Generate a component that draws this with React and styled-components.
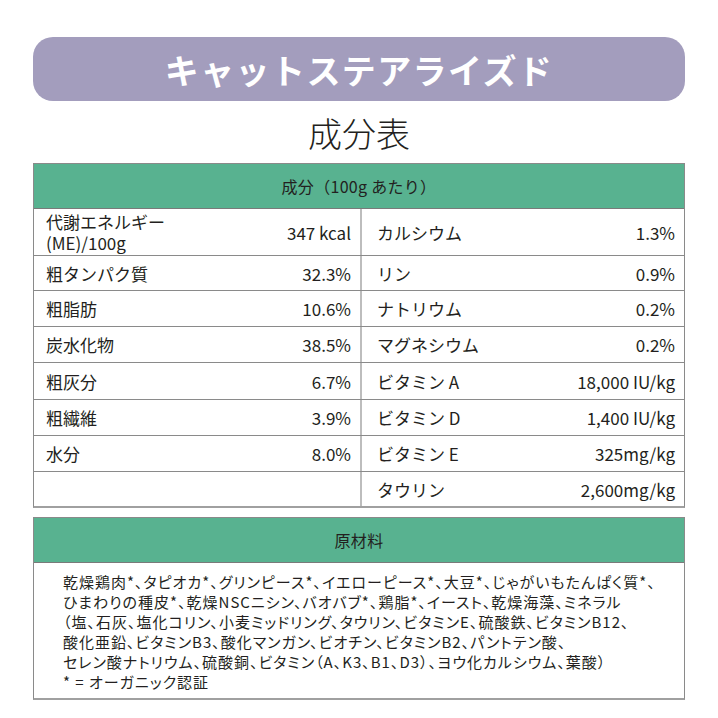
import styled, { createGlobalStyle } from 'styled-components';

const Global = createGlobalStyle`
* { box-sizing: border-box; }
body {
  margin: 0;
  background: #ffffff;
  font-family: "Noto Sans CJK JP", "Noto Sans", sans-serif;
  color: #231f20;
}
`

const Page = styled.div`
width: 718px;
height: 718px;
padding: 37px 33px 0 33px;
display: flex;
flex-direction: column;
`

const Banner = styled.div`
height: 64px;
border-radius: 20px;
background-color: #a39dbd;
color: #ffffff;
display: flex;
align-items: center;
justify-content: center;
font-size: 34px;
font-weight: 700;
letter-spacing: 1.4px;
`

const Title = styled.h1`
margin: 0;
height: 62px;
display: flex;
align-items: center;
justify-content: center;
font-size: 34px;
font-weight: 300;
color: #231f20;
`

const Table = styled.div`
border: 1px solid #8a8a8a;
border-bottom: 2px solid #a0a0a0;
display: flex;
flex-direction: column;
`

const Head = styled.div`
height: ${p => p.$h}px;
background-color: #58b290;
border-bottom: 1px solid #7a7a7a;
display: flex;
align-items: center;
justify-content: center;
font-size: 16px;
letter-spacing: 0.3px;
color: #231f20;
`

const Row = styled.div`
display: grid;
grid-template-columns: 326px 1fr;
height: ${p => p.$h}px;
border-top: ${p => (p.$first ? 'none' : '1px solid #8a8a8a')};
`

const Cell = styled.div`
display: flex;
align-items: center;
justify-content: space-between;
padding: ${p => (p.$right ? '0 9px 0 15px' : '0 9px 0 12px')};
border-left: ${p => (p.$right ? '2px solid #bdbdbd' : 'none')};
`

const Label = styled.span`
font-size: 17px;
line-height: 21px;
`

const Value = styled.span`
font-size: 17px;
white-space: nowrap;
`

const Spacer = styled.div`
height: 9px;
flex-shrink: 0;
`

const Ingredients = styled.div`
padding: 9px 0 6px 29px;
font-size: 15px;
line-height: 20px;
letter-spacing: 1px;
font-feature-settings: "palt";
white-space: nowrap;
`

const left = [
  ['代謝エネルギー\n(ME)/100g', '347 kcal'],
  ['粗タンパク質', '32.3%'],
  ['粗脂肪', '10.6%'],
  ['炭水化物', '38.5%'],
  ['粗灰分', '6.7%'],
  ['粗繊維', '3.9%'],
  ['水分', '8.0%'],
  ['', ''],
]

const right = [
  ['カルシウム', '1.3%'],
  ['リン', '0.9%'],
  ['ナトリウム', '0.2%'],
  ['マグネシウム', '0.2%'],
  ['ビタミン A', '18,000 IU/kg'],
  ['ビタミン D', '1,400 IU/kg'],
  ['ビタミン E', '325mg/kg'],
  ['タウリン', '2,600mg/kg'],
]

const heights = [46, 35, 36, 36, 37, 36, 36, 35]

const lines = [
  '乾燥鶏肉*、タピオカ*、グリンピース*、イエローピース*、大豆*、じゃがいもたんぱく質*、',
  'ひまわりの種皮*、乾燥NSCニシン、バオバブ*、鶏脂*、イースト、乾燥海藻、ミネラル',
  '（塩、石灰、塩化コリン、小麦ミッドリング、タウリン、ビタミンE、硫酸鉄、ビタミンB12、',
  '酸化亜鉛、ビタミンB3、酸化マンガン、ビオチン、ビタミンB2、パントテン酸、',
  'セレン酸ナトリウム、硫酸銅、ビタミン（A、K3、B1、D3）、ヨウ化カルシウム、葉酸）',
  '* = オーガニック認証',
]

function App() {
  return (
    <Page>
      <Global />
      <Banner>キャットステアライズド</Banner>
      <Title>成分表</Title>
      <Table>
        <Head $h={45}>成分（100g あたり）</Head>
        {heights.map((h, i) => (
          <Row key={i} $h={h} $first={i === 0}>
            <Cell>
              <Label>
                {left[i][0].split('\n').map((t, j) => (
                  <div key={j}>{t}</div>
                ))}
              </Label>
              <Value>{left[i][1]}</Value>
            </Cell>
            <Cell $right>
              <Label>{right[i][0]}</Label>
              <Value>{right[i][1]}</Value>
            </Cell>
          </Row>
        ))}
      </Table>
      <Spacer />
      <Table>
        <Head $h={45}>原材料</Head>
        <Ingredients>
          {lines.map((l, i) => (
            <div key={i}>{l}</div>
          ))}
        </Ingredients>
      </Table>
    </Page>
  );
}

export default App;
